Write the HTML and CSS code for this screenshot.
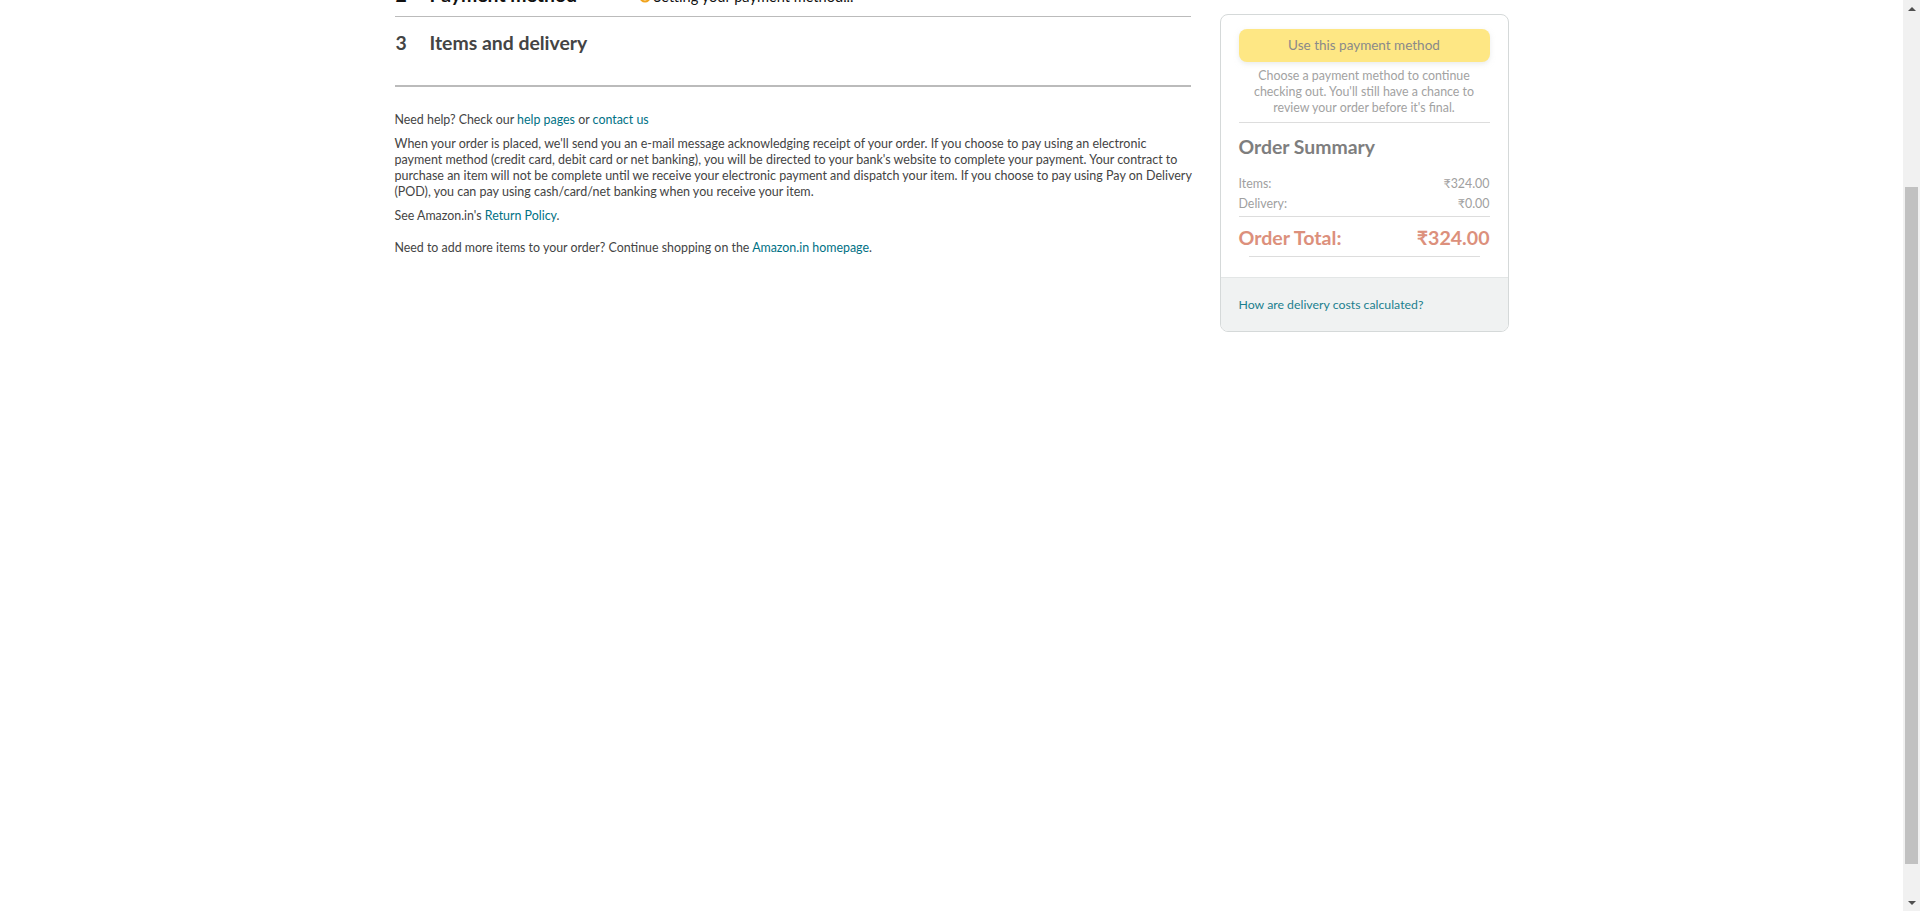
FILE: index.html
```html
<!DOCTYPE html>
<html lang="en">
<head>
<meta charset="utf-8">
<title>Checkout</title>
<link rel="stylesheet" href="styles.css">
</head>
<body>
<div class="viewport">
  <div class="page">
    <div class="container">
      <div class="main-col">
        <div class="section section-payment">
          <div class="sec-num">2</div>
          <div class="sec-title">Payment method</div>
          <div class="sec-status">
            <svg class="spinner" width="12" height="12" viewBox="0 0 12 12"><path d="M6 1.5 A4.5 4.5 0 1 0 10.5 6" fill="none" stroke="#f0a31c" stroke-width="2.2" stroke-linecap="round"/></svg>
            <span>Setting your payment method...</span>
          </div>
        </div>
        <div class="section section-items">
          <div class="sec-num">3</div>
          <div class="sec-title">Items and delivery</div>
        </div>
        <div class="help">
          <p class="help-line">Need help? Check our <a href="#">help pages</a> or <a href="#">contact us</a></p>
          <p class="help-para">When your order is placed, we'll send you an e-mail message acknowledging receipt of your order. If you choose to pay using an electronic<br>payment method (credit card, debit card or net banking), you will be directed to your bank's website to complete your payment. Your contract to<br>purchase an item will not be complete until we receive your electronic payment and dispatch your item. If you choose to pay using Pay on Delivery<br>(POD), you can pay using cash/card/net banking when you receive your item.</p>
          <p class="help-line">See Amazon.in's <a href="#">Return Policy</a>.</p>
          <p class="help-line help-more">Need to add more items to your order? Continue shopping on the <a href="#">Amazon.in homepage</a>.</p>
        </div>
      </div>
      <div class="side-col">
        <div class="summary-card">
          <div class="summary-body">
            <div class="use-btn">Use this payment method</div>
            <p class="use-note">Choose a payment method to continue checking out. You'll still have a chance to review your order before it's final.</p>
            <hr class="divider">
            <h3 class="summary-title">Order Summary</h3>
            <div class="sum-row"><span>Items:</span><span>₹324.00</span></div>
            <div class="sum-row"><span>Delivery:</span><span>₹0.00</span></div>
            <hr class="divider divider-tight">
            <div class="total-row"><span>Order Total:</span><span>₹324.00</span></div>
            <hr class="divider divider-inset">
          </div>
          <div class="summary-foot">
            <a href="#">How are delivery costs calculated?</a>
          </div>
        </div>
      </div>
    </div>
  </div>
  <div class="scrollbar">
    <div class="sb-arrow sb-up"></div>
    <div class="sb-track">
      <div class="sb-thumb"></div>
    </div>
    <div class="sb-arrow sb-down"></div>
  </div>
</div>
</body>
</html>
```
FILE: styles.css
```css
html, body {
  margin: 0;
  padding: 0;
  height: 100%;
  overflow: hidden;
  background: #fff;
}
body {
  font-family: Lato, "Liberation Sans", Arial, sans-serif;
  color: #333;
}
.viewport {
  display: flex;
  height: 911px;
}
.page {
  flex: 1;
  min-width: 0;
}
.container {
  width: 1114px;
  margin: 0 auto;
  display: flex;
  gap: 29px;
  align-items: flex-start;
}
.main-col {
  width: 796px;
  flex: none;
}
.side-col {
  width: 289px;
  flex: none;
  padding-top: 14px;
}

/* sections */
.section {
  display: grid;
  grid-template-columns: 35px 209px 1fr;
  align-items: baseline;
  font-size: 19.4px;
  line-height: 24px;
  font-weight: 700;
  color: #333;
}
.section-payment {
  margin-top: -17px;
  padding-bottom: 9px;
  border-bottom: 1px solid #bbb;
  color: #111;
}
.section-items {
  padding-top: 14px;
  padding-bottom: 30px;
  border-bottom: 2px solid #bbb;
  color: #444;
}
.sec-num {
  padding-left: 1px;
}
.sec-status {
  display: flex;
  align-items: baseline;
  gap: 3px;
  font-size: 14.6px;
  line-height: 18px;
  font-weight: 400;
  color: #111;
}
.spinner {
  align-self: flex-end;
  margin-bottom: 3px;
}

/* help */
.help {
  padding-top: 25px;
  font-size: 12.4px;
  line-height: 16px;
  color: #444;
}
.help p {
  margin: 0 0 8px 0;
}
.help .help-para {
  font-size: 12.5px;
  white-space: nowrap;
}
.help .help-more {
  margin-top: 16px;
}
.help a {
  color: #007185;
  text-decoration: none;
}

/* summary card */
.summary-card {
  border: 1px solid #d5d9d9;
  border-radius: 8px;
  overflow: hidden;
  background: #fff;
}
.summary-body {
  padding: 14px 18px 20px;
}
.use-btn {
  height: 33px;
  line-height: 33px;
  border-radius: 8px;
  background: #fee784;
  color: #8a8a8a;
  text-align: center;
  font-size: 13.5px;
  box-shadow: 0 2px 5px rgba(213, 217, 217, 0.5);
}
.use-note {
  margin: 6px 0 6px;
  font-size: 12.4px;
  line-height: 16px;
  color: #a2a2a2;
  text-align: center;
}
.divider {
  border: 0;
  border-top: 1px solid #dddddd;
  margin: 0;
}
.summary-title {
  margin: 12px 0 15px;
  font-size: 19.4px;
  line-height: 24px;
  font-weight: 700;
  color: #7e7e7e;
}
.sum-row {
  display: flex;
  justify-content: space-between;
  font-size: 12.4px;
  line-height: 20px;
  color: #a0a0a0;
}
.divider-tight {
  margin-top: 2px;
}
.total-row {
  display: flex;
  justify-content: space-between;
  margin-top: 9px;
  font-size: 19.6px;
  line-height: 24px;
  font-weight: 700;
  color: #dc907c;
}
.divider-inset {
  margin: 6px 10px 0;
}
.summary-foot {
  background: #f0f2f2;
  border-top: 1px solid #e3e6e6;
  height: 53px;
  display: flex;
  align-items: center;
  padding: 0 18px;
  font-size: 12.3px;
}
.summary-foot a {
  color: #1a7f8e;
  text-decoration: none;
}

/* scrollbar */
.scrollbar {
  width: 17px;
  flex: none;
  background: #f1f1f1;
  display: flex;
  flex-direction: column;
}
.sb-arrow {
  height: 17px;
  flex: none;
  display: flex;
  align-items: center;
  justify-content: center;
}
.sb-up::before {
  content: "";
  border-left: 4px solid transparent;
  border-right: 4px solid transparent;
  border-bottom: 4px solid #505050;
}
.sb-down::before {
  content: "";
  border-left: 4px solid transparent;
  border-right: 4px solid transparent;
  border-top: 4px solid #505050;
}
.sb-track {
  flex: 1;
  padding: 170px 2px 0;
}
.sb-thumb {
  height: 677px;
  background: #c1c1c1;
}
```
